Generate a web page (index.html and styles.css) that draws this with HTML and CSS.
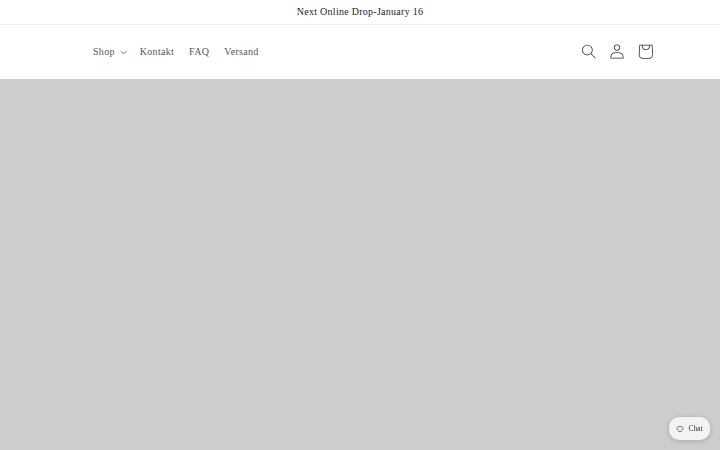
FILE: index.html
```html
<!DOCTYPE html>
<html lang="de">
<head>
<meta charset="utf-8">
<title>Shop</title>
<link rel="stylesheet" href="styles.css">
</head>
<body>
<div class="announcement"><p class="announcement-text">Next Online Drop-January 16</p></div>
<header class="header">
  <nav class="nav">
    <a class="nav-link shop-link" href="#">Shop
      <svg class="caret" viewBox="0 0 10 6" aria-hidden="true"><path d="M1 1l4 4 4-4" fill="none" stroke="currentColor" stroke-width="1.100"/></svg>
    </a>
    <a class="nav-link" href="#">Kontakt</a>
    <a class="nav-link" href="#">FAQ</a>
    <a class="nav-link" href="#">Versand</a>
  </nav>
  <div class="icons">
    <a class="icon-btn" href="#" aria-label="Suche"><svg class="icon" viewBox="0 0 18 19"><path fill-rule="evenodd" clip-rule="evenodd" d="M11.03 11.68A5.784 5.784 0 112.85 3.5a5.784 5.784 0 018.18 8.18zm.26 1.12a6.78 6.78 0 11.72-.7l5.4 5.4a.5.5 0 11-.71.7l-5.41-5.4z"/></svg></a>
    <a class="icon-btn" href="#" aria-label="Konto"><svg class="icon" viewBox="0 0 18 19"><path fill-rule="evenodd" clip-rule="evenodd" d="M6 4.5a3 3 0 116 0 3 3 0 01-6 0zm3-4a4 4 0 100 8 4 4 0 000-8zm5.58 12.15c1.12.82 1.83 2.24 1.91 4.85H1.51c.08-2.6.79-4.03 1.9-4.85C4.66 11.75 6.5 11.5 9 11.5s4.35.26 5.58 1.15zM9 10.5c-2.5 0-4.65.24-6.17 1.35C1.27 12.98.5 14.93.5 18v.5h17V18c0-3.07-.77-5.02-2.33-6.15-1.52-1.1-3.67-1.35-6.17-1.35z"/></svg></a>
    <a class="icon-btn" href="#" aria-label="Warenkorb"><svg class="icon-cart" viewBox="0 0 40 40"><path fill-rule="evenodd" clip-rule="evenodd" d="m15.75 11.8h-3.16l-.77 11.6a5 5 0 0 0 4.99 5.34h7.38a5 5 0 0 0 4.99-5.33l-.78-11.61zm0 1h-2.22l-.71 10.67a4 4 0 0 0 3.99 4.27h7.38a4 4 0 0 0 4-4.27l-.72-10.67h-2.22v.63a4.75 4.75 0 1 1 -9.5 0zm8.5 0h-7.5v.63a3.75 3.75 0 1 0 7.5 0z"/></svg></a>
  </div>
</header>
<main class="hero"></main>
<button class="chat" type="button">
  <svg class="chat-icon" viewBox="0 0 12 12" aria-hidden="true"><path d="M6 10.2C3.2 8.6 1.5 6.9 1.5 4.8 1.5 3.2 2.7 2.2 6 2.2s4.500 1 4.500 2.600C10.500 6.900 8.800 8.600 6 10.200z" fill="none" stroke="currentColor" stroke-width="1"/></svg>
  <span>Chat</span>
</button>
</body>
</html>
```
FILE: styles.css
```css
* { box-sizing: border-box; }
html, body { margin: 0; height: 100%; }
body {
  display: flex;
  flex-direction: column;
  height: 450px;
  overflow: hidden;
  background: #fff;
  font-family: "Liberation Serif", "Times New Roman", serif;
  color: #222;
}
.announcement {
  height: 25px;
  padding-bottom: 2px;
  border-bottom: 1px solid #f0f0f0;
  display: flex;
  align-items: center;
  justify-content: center;
}
.announcement-text {
  margin: 0;
  font-size: 10px;
  letter-spacing: 0.27px;
  color: #1c1c1c;
}
.header {
  height: 54px;
  padding: 0 60px 0 86px;
  display: flex;
  align-items: center;
  justify-content: space-between;
}
.nav { display: flex; align-items: center; }
.nav-link {
  display: flex;
  align-items: center;
  padding: 0 7.500px;
  color: #555;
  text-decoration: none;
  font-size: 10px;
  letter-spacing: 0.3px;
  height: 30px;
  margin-top: -2px;
}
.shop-link { padding-left: 7px; padding-right: 0; margin-right: 5px; }
.caret { width: 7px; height: 5px; margin-left: 5.500px; color: #444; margin-top: 2px; }
.icons { display: flex; align-items: center; }
.icon-btn {
  width: 28.500px;
  height: 44px;
  display: flex;
  align-items: center;
  justify-content: center;
  color: #333;
  margin-top: -1px;
}
.icon { width: 14px; height: 15px; fill: #333; }
.icon-cart { width: 33px; height: 33px; fill: #333; flex: none; }
.hero { flex: 1; background: #cdcdcd; }
.chat {
  position: fixed;
  right: 10px;
  bottom: 10px;
  width: 41px;
  height: 23px;
  border: 0;
  border-radius: 10px;
  background: #f3f3f3;
  box-shadow: 0 1px 5px rgba(0,0,0,.2);
  display: flex;
  align-items: center;
  justify-content: center;
  gap: 4px;
  padding: 0;
  font-family: "Liberation Serif", serif;
  font-size: 7.500px;
  color: #333;
}
.chat-icon { width: 8px; height: 8px; }
```
